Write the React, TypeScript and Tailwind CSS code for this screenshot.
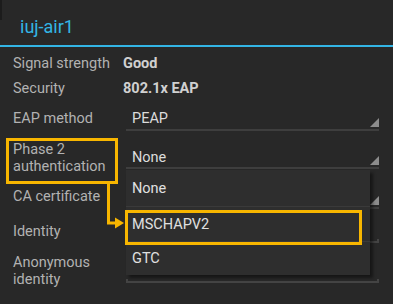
import React from "react";

const Tri = () => (
  <svg width="9" height="9" viewBox="0 0 9 9" className="absolute right-0 bottom-[2px]">
    <polygon points="9,0 9,9 0,9" fill="#8c8c8c" />
  </svg>
);

function Spinner({ text, h, pt }: { text?: string; h: string; pt: string }) {
  return (
    <div className={`relative ml-[3px] w-[253px] ${h} ${pt} border-b-2 border-[#3e3e3e]`}>
      {text && <div className="pl-[6px] text-[14.5px] leading-[17px] text-[#dcdcdc]">{text}</div>}
      <Tri />
    </div>
  );
}

function Edit({ h }: { h: string }) {
  return (
    <div className={`ml-[3px] w-[253px] ${h} flex flex-col justify-end`}>
      <div className="h-[4px] border-x-2 border-b-2 border-[#444444]" />
    </div>
  );
}

export default function App() {
  const label = "w-[110px] text-[14.5px] leading-[17px] text-[#b2b2b2]";
  return (
    <div className="relative w-[393px] h-[304px] overflow-hidden bg-[#282828] font-['Roboto',sans-serif]">
      <div className="absolute left-0 top-0 w-[2px] h-[20px] bg-[#1c1c1c]" />
      <div className="h-[47px] pl-[20px] flex items-center pt-[7px] border-b-2 border-[#33b5e5] text-[18px] text-[#33b5e5]">
        iuj-air1
      </div>
      <div className="pl-[13px]">
        <div className="flex items-start h-[29px] pt-[8px]">
          <div className={label}>Signal strength</div>
          <div className="text-[14.5px] leading-[17px] font-bold text-[#d0d0d0]">Good</div>
        </div>
        <div className="flex items-start h-[25px] pt-[4px]">
          <div className={label}>Security</div>
          <div className="text-[14.5px] leading-[17px] font-bold text-[#d0d0d0]">802.1x EAP</div>
        </div>
        <div className="flex items-start h-[31px]">
          <div className={`${label} pt-[9px]`}>EAP method</div>
          <Spinner text="PEAP" h="h-[30px]" pt="pt-[9px]" />
        </div>
        <div className="flex items-start h-[38px]">
          <div className={`${label} pt-[9px]`}>Phase 2<br />authentication</div>
          <Spinner text="None" h="h-[37px]" pt="pt-[17px]" />
        </div>
        <div className="flex items-start h-[39px]">
          <div className={`${label} pt-[18px]`}>CA certificate</div>
          <Spinner h="h-[39px]" pt="pt-[18px]" />
        </div>
        <div className="flex items-start h-[34px]">
          <div className={`${label} pt-[14px]`}>Identity</div>
          <Edit h="h-[34px]" />
        </div>
        <div className="flex items-start h-[40px]">
          <div className={`${label} pt-[11px]`}>Anonymous<br />identity</div>
          <Edit h="h-[40px]" />
        </div>
      </div>

      {/* dropdown popup */}
      <div className="absolute left-[126px] top-[170px] w-[244px] h-[105px] bg-[#2e2e2e] shadow-[3px_3px_3px_rgba(0,0,0,0.45)] flex flex-col text-[14.5px] leading-[17px] text-[#e0e0e0]">
        <div className="h-[36px] pl-[6px] flex items-center">None</div>
        <div className="h-[1px] bg-[#3a3a3a]" />
        <div className="h-[34px] pl-[6px] flex items-center">MSCHAPV2</div>
        <div className="h-[1px] bg-[#3a3a3a]" />
        <div className="flex-1 pl-[6px] flex items-center">GTC</div>
      </div>

      {/* annotation boxes */}
      <div className="absolute left-[6px] top-[138px] w-[112px] h-[46px] border-[3px] border-[#f8b600]" />
      <div className="absolute left-[125px] top-[210px] w-[237px] h-[35px] border-[3px] border-[#f8b600]" />
      <svg className="absolute left-0 top-0" width="393" height="304">
        <polyline points="108.5,184 108.5,223 117,223" fill="none" stroke="#f8b600" strokeWidth="3" />
        <polygon points="115,217.5 124,223 115,228.5" fill="#f8b600" />
      </svg>
    </div>
  );
}
